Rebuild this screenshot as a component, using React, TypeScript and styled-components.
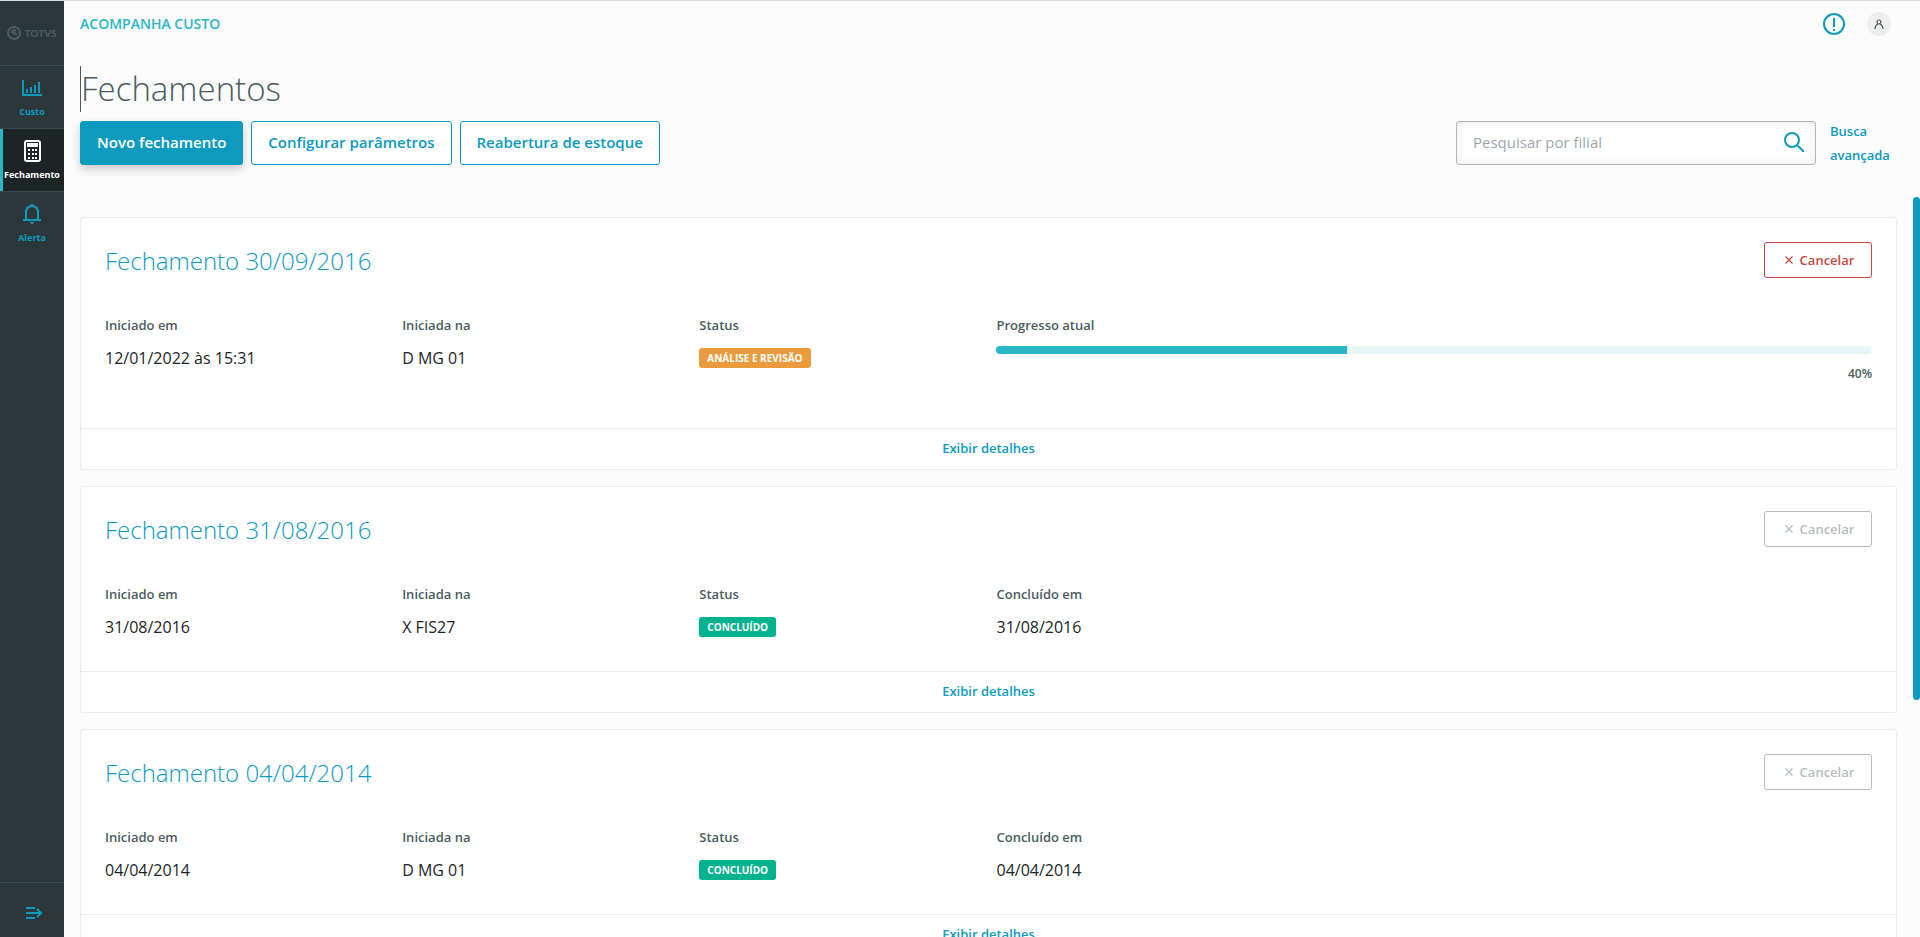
import React from 'react';
import styled, { createGlobalStyle, css } from 'styled-components';

const GlobalStyle = createGlobalStyle`
  * { box-sizing: border-box; }
  body { margin: 0; background: #fbfbfb; color: #4a5c60; font-family: "Open Sans", "Noto Sans", sans-serif; font-size: 16px; line-height: 24px; }
  button, input { font: inherit; }
  h1, h2, p, dl, dd { margin: 0; }
  a { color: #0c9abe; text-decoration: none; }
`;

const Shell = styled.div`
  display: flex;
  height: 100vh;
  overflow: hidden;
  border-top: 1px solid #dadbdb;
`;

const Sidebar = styled.nav`
  display: flex;
  flex-direction: column;
  flex: none;
  width: 64px;
  background: #2c3739;
`;

const Brand = styled.div`
  display: flex;
  align-items: center;
  justify-content: center;
  gap: 3px;
  height: 65px;
  border-bottom: 1px solid #3c4a4d;
  color: #4a5c60;
  font: 900 10px/16px Lato, sans-serif;
`;

const MenuItem = styled.a<{ $active?: boolean }>`
  display: flex;
  flex-direction: column;
  align-items: center;
  gap: 4px;
  height: 63px;
  padding-top: 10px;
  border-bottom: 1px solid #3c4a4d;
  color: #0c9abe;
  font-size: 9px;
  font-weight: 700;
  line-height: 16px;
  white-space: nowrap;
  &:last-of-type { border-bottom: 0; }
  ${(p) => p.$active && css`
    background: #1d2426;
    color: #fff;
    box-shadow: inset 3px 0 #29b6c5;
  `}
`;

const ExpandButton = styled.button`
  display: flex;
  align-items: center;
  justify-content: center;
  height: 55px;
  margin-top: auto;
  padding: 6px 0 0 4px;
  border: 0;
  border-top: 1px solid #3c4a4d;
  background: none;
  color: #0c9abe;
`;

const Main = styled.main`
  display: flex;
  flex: 1;
  flex-direction: column;
  min-width: 0;
`;

const TopBar = styled.header`
  display: flex;
  align-items: center;
  justify-content: space-between;
  height: 46px;
  padding: 0 29px 0 16px;
`;

const Product = styled.span`
  color: #29b6c5;
  font-size: 14px;
  font-weight: 600;
`;

const TopActions = styled.div`
  display: flex;
  align-items: center;
  gap: 22px;
`;

const IconButton = styled.button`
  display: flex;
  padding: 0;
  border: 0;
  background: none;
  color: #0c9abe;
`;

const Avatar = styled(IconButton)`
  align-items: center;
  justify-content: center;
  width: 24px;
  height: 24px;
  border-radius: 50%;
  background: #eeeeee;
  color: #4a5c60;
`;

const PageHeader = styled.div`
  padding: 19px 29px 30px 16px;
`;

const Title = styled.h1`
  margin-bottom: 7px;
  border-left: 1px solid #4a5c60;
  font-size: 33px;
  font-weight: 300;
  line-height: 46px;
`;

const Toolbar = styled.div`
  display: flex;
  align-items: center;
  gap: 8px;
`;

const Button = styled.button<{ $primary?: boolean }>`
  height: 44px;
  padding: 0 16px 2px;
  border: 1px solid #0c9abe;
  border-radius: 3px;
  background: ${(p) => (p.$primary ? '#0c9abe' : '#fff')};
  color: ${(p) => (p.$primary ? '#fff' : '#0c9abe')};
  box-shadow: ${(p) => (p.$primary ? '0 4px 8px rgba(0, 0, 0, 0.2)' : 'none')};
  font-size: 15px;
  font-weight: 600;
`;

const Filter = styled.form`
  display: flex;
  align-items: center;
  gap: 14px;
  margin-left: auto;
`;

const SearchBox = styled.label`
  display: flex;
  align-items: center;
  width: 360px;
  height: 44px;
  padding: 0 11px 2px 16px;
  border: 1px solid #b0b8ba;
  border-radius: 3px;
  background: #fff;
  box-shadow: inset 0 0 8px rgba(0, 0, 0, 0.1);
`;

const SearchInput = styled.input`
  flex: 1;
  min-width: 0;
  padding: 0;
  border: 0;
  outline: 0;
  background: none;
  font-size: 15px;
  &::placeholder { color: #9da7a9; opacity: 1; }
`;

const AdvancedLink = styled.a`
  width: 61px;
  font-size: 13px;
  font-weight: 600;
`;

const ScrollArea = styled.div`
  display: flex;
  flex: 1;
  justify-content: space-between;
  min-height: 0;
`;

const CardList = styled.div`
  display: flex;
  flex: 1;
  flex-direction: column;
  gap: 16px;
  margin-right: 16px;
  padding: 20px 0 0 16px;
  overflow: hidden;
`;

const ScrollTrack = styled.div`
  width: 7px;
`;

const ScrollThumb = styled.div`
  height: 68%;
  border-radius: 4px;
  background: #0c9abe;
`;

const Card = styled.article`
  flex: none;
  border: 1px solid #ebeced;
  border-radius: 3px;
  background: #fff;
`;

const CardHeader = styled.div`
  display: flex;
  align-items: flex-start;
  justify-content: space-between;
  height: 64px;
  padding: 24px 24px 0;
`;

const CardTitle = styled.h2`
  color: #0c9abe;
  font-size: 24px;
  font-weight: 300;
  line-height: 38px;
`;

const CancelButton = styled.button`
  display: flex;
  align-items: center;
  justify-content: center;
  gap: 7px;
  width: 108px;
  height: 36px;
  padding: 0 0 1px 3px;
  border: 1px solid #c64840;
  border-radius: 3px;
  background: #fff;
  color: #c64840;
  font-size: 13px;
  font-weight: 600;
  &:disabled { border-color: #b6bdbf; color: #b6bdbf; }
`;

const Fields = styled.dl<{ $tall: boolean }>`
  display: grid;
  grid-template-columns: repeat(6, 1fr);
  gap: 16px;
  height: ${(p) => (p.$tall ? 146 : 120)}px;
  padding: 31px 24px 0;
`;

const Field = styled.div<{ $wide?: boolean }>`
  grid-column: span ${(p) => (p.$wide ? 3 : 1)};
`;

const Label = styled.dt`
  font-size: 13px;
  font-weight: 600;
`;

const Value = styled.dd`
  padding-top: 9px;
  color: #1d2426;
`;

const Tag = styled.span<{ $done: boolean }>`
  display: block;
  width: fit-content;
  height: 20px;
  margin-top: 2px;
  padding: 0 8px;
  border-radius: 3px;
  background: ${(p) => (p.$done ? '#00b28e' : '#ea9b3e')};
  color: #fff;
  font-size: 10px;
  font-weight: 700;
  line-height: 20px;
  text-transform: uppercase;
`;

const ProgressTrack = styled.div`
  height: 8px;
  border-radius: 4px;
  background: #e8f6f7;
  overflow: hidden;
`;

const ProgressFill = styled.div`
  height: 100%;
  background: #29b6c5;
`;

const Percent = styled.p`
  padding-top: 8px;
  color: #4a5c60;
  font-size: 12px;
  font-weight: 600;
  text-align: right;
`;

const DetailsButton = styled.button`
  display: block;
  width: 100%;
  height: 41px;
  padding: 0 0 2px;
  border: 0;
  border-top: 1px solid #ebeced;
  background: none;
  color: #0c9abe;
  font-size: 13px;
  font-weight: 600;
`;

const ChartIcon = () => (
  <svg width="24" height="24" viewBox="0 0 24 24" fill="none" stroke="currentColor" strokeWidth="2" aria-hidden="true">
    <path d="M3 4v15h19M7 17v-4M11 17v-6M15 17V9M19 17V6" />
  </svg>
);

const CalculatorIcon = () => (
  <svg width="24" height="24" viewBox="0 0 24 24" aria-hidden="true">
    <rect x="5" y="2" width="15" height="20" rx="2" fill="#1d2426" stroke="currentColor" strokeWidth="2" />
    <path d="M7 4h11v4H7zM8 10h2v2H8zM12 10h2v2h-2zM15 10h2v2h-2zM8 14h2v2H8zM12 14h2v2h-2zM15 14h2v2h-2zM8 18h2v2H8zM12 18h2v2h-2zM15 18h2v2h-2z" fill="currentColor" />
  </svg>
);

const BellIcon = () => (
  <svg width="24" height="24" viewBox="0 0 24 24" fill="none" stroke="currentColor" strokeWidth="2" aria-hidden="true">
    <path d="M3 18h18M6 18v-7c0-4 2-7 6-7s6 3 6 7v7" />
    <path d="M10 4a2 2 0 0 1 4 0zM10 20h4a2 2 0 0 1-4 0z" fill="currentColor" stroke="none" />
  </svg>
);

const CloseIcon = () => (
  <svg width="8" height="8" viewBox="0 0 8 8" stroke="currentColor" strokeWidth="1.2" aria-hidden="true">
    <path d="M0.5 0.5l7 7M7.5 0.5l-7 7" />
  </svg>
);

interface Closing {
  date: string;
  started: string;
  branch: string;
  status: string;
  progress?: number;
}

const closings: Closing[] = [
  { date: '30/09/2016', started: '12/01/2022 às 15:31', branch: 'D MG 01', status: 'Análise e revisão', progress: 40 },
  { date: '31/08/2016', started: '31/08/2016', branch: 'X FIS27', status: 'Concluído' },
  { date: '04/04/2014', started: '04/04/2014', branch: 'D MG 01', status: 'Concluído' },
];

const ClosingCard = ({ date, started, branch, status, progress }: Closing) => {
  const running = progress !== undefined;
  return (
    <Card>
      <CardHeader>
        <CardTitle>Fechamento {date}</CardTitle>
        <CancelButton type="button" disabled={!running}><CloseIcon />Cancelar</CancelButton>
      </CardHeader>
      <Fields $tall={running}>
        <Field><Label>Iniciado em</Label><Value>{started}</Value></Field>
        <Field><Label>Iniciada na</Label><Value>{branch}</Value></Field>
        <Field><Label>Status</Label><Value><Tag $done={!running}>{status}</Tag></Value></Field>
        {running ? (
          <Field $wide>
            <Label>Progresso atual</Label>
            <Value>
              <ProgressTrack role="progressbar" aria-label="Progresso atual" aria-valuenow={progress}>
                <ProgressFill style={{ width: `${progress}%` }} />
              </ProgressTrack>
              <Percent>{progress}%</Percent>
            </Value>
          </Field>
        ) : (
          <Field><Label>Concluído em</Label><Value>{date}</Value></Field>
        )}
      </Fields>
      <DetailsButton type="button">Exibir detalhes</DetailsButton>
    </Card>
  );
};

export default function App() {
  return (
    <>
      <GlobalStyle />
      <Shell>
        <Sidebar>
          <Brand>
            <svg width="14" height="14" viewBox="0 0 14 14" fill="none" stroke="currentColor" strokeWidth="2" aria-hidden="true">
              <circle cx="7" cy="7" r="6" />
              <path d="M4 5.5l6 3M5 4.5h4" />
            </svg>
            TOTVS
          </Brand>
          <MenuItem href="#custo"><ChartIcon />Custo</MenuItem>
          <MenuItem href="#fechamento" $active><CalculatorIcon />Fechamento</MenuItem>
          <MenuItem href="#alerta"><BellIcon />Alerta</MenuItem>
          <ExpandButton type="button" aria-label="Expandir menu">
            <svg width="17" height="14" viewBox="0 0 17 14" fill="none" stroke="currentColor" strokeWidth="2" aria-hidden="true">
              <path d="M0 2h9M0 7h15M0 12h9M11 3l4 4-4 4" />
            </svg>
          </ExpandButton>
        </Sidebar>
        <Main>
          <TopBar>
            <Product>ACOMPANHA CUSTO</Product>
            <TopActions>
              <IconButton type="button" aria-label="Avisos">
                <svg width="22" height="22" viewBox="0 0 22 22" fill="none" stroke="currentColor" strokeWidth="2" aria-hidden="true">
                  <circle cx="11" cy="11" r="10" />
                  <path d="M11 5v9M11 16v2" />
                </svg>
              </IconButton>
              <Avatar type="button" aria-label="Perfil">
                <svg width="10" height="10" viewBox="0 0 10 10" fill="none" stroke="currentColor" strokeWidth="1.2" aria-hidden="true">
                  <circle cx="5" cy="3" r="2" />
                  <path d="M1 10c0-3 1-4 3-5M9 10c0-3-1-4-3-5" />
                </svg>
              </Avatar>
            </TopActions>
          </TopBar>
          <PageHeader>
            <Title>Fechamentos</Title>
            <Toolbar>
              <Button type="button" $primary>Novo fechamento</Button>
              <Button type="button">Configurar parâmetros</Button>
              <Button type="button">Reabertura de estoque</Button>
              <Filter>
                <SearchBox>
                  <SearchInput aria-label="Pesquisar por filial" placeholder="Pesquisar por filial" />
                  <IconButton type="button" aria-label="Pesquisar">
                    <svg width="20" height="20" viewBox="0 0 20 20" fill="none" stroke="currentColor" strokeWidth="2" aria-hidden="true">
                      <circle cx="8" cy="8" r="7" />
                      <path d="M13 13l7 7" />
                    </svg>
                  </IconButton>
                </SearchBox>
                <AdvancedLink href="#busca">Busca avançada</AdvancedLink>
              </Filter>
            </Toolbar>
          </PageHeader>
          <ScrollArea>
            <CardList>
              {closings.map((closing) => <ClosingCard key={closing.date} {...closing} />)}
            </CardList>
            <ScrollTrack><ScrollThumb /></ScrollTrack>
          </ScrollArea>
        </Main>
      </Shell>
    </>
  );
}
